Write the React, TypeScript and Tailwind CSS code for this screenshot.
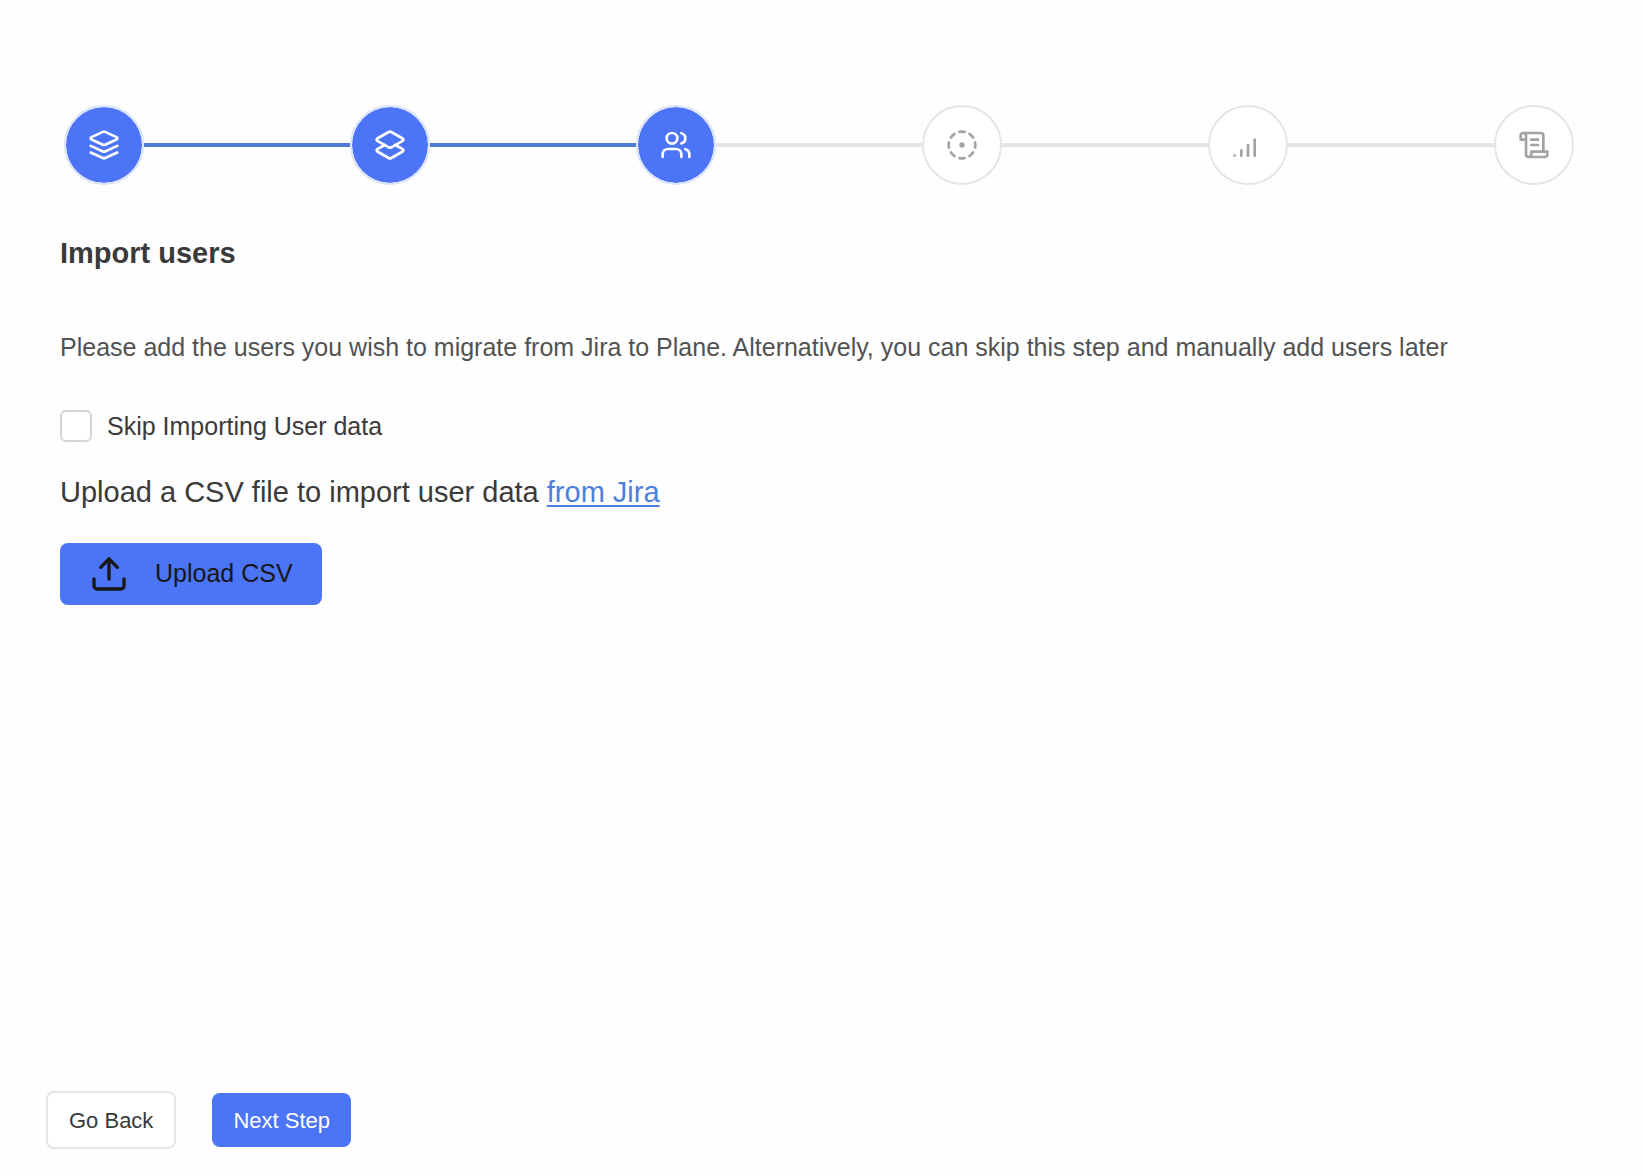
import { Fragment } from "react";
import { CircleDotDashed, SignalHigh, Upload } from "lucide-react";

function StrokeIcon({ paths, size = 32 }: { paths: string[]; size?: number }) {
  return (
    <svg
      width={size}
      height={size}
      viewBox="0 0 24 24"
      fill="none"
      stroke="currentColor"
      strokeWidth={2}
      strokeLinecap="round"
      strokeLinejoin="round"
      aria-hidden="true"
    >
      {paths.map((d) => (
        <path key={d} d={d} />
      ))}
    </svg>
  );
}

const layers = [
  "m12.83 2.18a2 2 0 0 0-1.66 0L2.6 6.08a1 1 0 0 0 0 1.83l8.58 3.91a2 2 0 0 0 1.66 0l8.58-3.9a1 1 0 0 0 0-1.83Z",
  "m22 17.65-9.17 4.16a2 2 0 0 1-1.66 0L2 17.65",
  "m22 12.65-9.17 4.16a2 2 0 0 1-1.66 0L2 12.65",
];

const twoLayers = [
  "m16.02 12 5.48 3.13a1 1 0 0 1 0 1.74L13 21.74a2 2 0 0 1-2 0l-8.5-4.87a1 1 0 0 1 0-1.74L7.98 12",
  "M13 13.74a2 2 0 0 1-2 0L2.5 8.87a1 1 0 0 1 0-1.74L11 2.26a2 2 0 0 1 2 0l8.5 4.87a1 1 0 0 1 0 1.74Z",
];

const users = [
  "M16 21v-2a4 4 0 0 0-4-4H6a4 4 0 0 0-4 4v2",
  "M5 7a4 4 0 1 0 8 0a4 4 0 1 0-8 0",
  "M22 21v-2a4 4 0 0 0-3-3.87",
  "M16 3.13a4 4 0 0 1 0 7.75",
];

const scroll = [
  "M8 21h12a2 2 0 0 0 2-2v-2H10v2a2 2 0 1 1-4 0V5a2 2 0 1 0-4 0v3h4",
  "M19 17V5a2 2 0 0 0-2-2H4",
  "M15 8h-5",
  "M15 12h-5",
];

const steps = [
  { label: "Import Jira", icon: <StrokeIcon paths={layers} />, done: true },
  { label: "Select project", icon: <StrokeIcon paths={twoLayers} />, done: true },
  { label: "Import users", icon: <StrokeIcon paths={users} />, done: true },
  { label: "Map states", icon: <CircleDotDashed size={32} />, done: false },
  { label: "Map priorities", icon: <SignalHigh size={32} />, done: false },
  { label: "Summary", icon: <StrokeIcon paths={scroll} />, done: false },
];

function Stepper() {
  return (
    <nav aria-label="Import steps" className="flex items-center pr-2 pl-1">
      {steps.map(({ label, icon, done }, index) => (
        <Fragment key={label}>
          {index > 0 && (
            <div className={done ? "h-1 flex-1 bg-[#4c78d8]" : "h-1 flex-1 bg-[#e5e5e5]"} />
          )}
          <div
            role="img"
            aria-label={label}
            className={
              done
                ? "flex size-20 shrink-0 items-center justify-center rounded-full border-2 border-[#dbe3fb] bg-[#4b74f6] bg-clip-padding text-white"
                : "flex size-20 shrink-0 items-center justify-center rounded-full border-2 border-[#e5e5e5] bg-white text-[#a3a3a3]"
            }
          >
            {icon}
          </div>
        </Fragment>
      ))}
    </nav>
  );
}

export default function App() {
  return (
    <div className="flex min-h-screen flex-col bg-[#fefefe] pt-[105px] pb-[27px] font-['Liberation_Sans',Arial,sans-serif] text-[#3a3a3a]">
      <main className="flex flex-1 flex-col items-stretch px-[60px]">
        <Stepper />
        <h1 className="mt-12 text-[29px] leading-10 font-bold">Import users</h1>
        <p className="mt-14 text-[25px] leading-9 text-[#525252]">
          Please add the users you wish to migrate from Jira to Plane. Alternatively, you can skip this step and
          manually add users later
        </p>
        <label className="mt-[43px] flex items-center gap-[15px] self-start text-[25px] leading-9">
          <input
            type="checkbox"
            className="size-8 appearance-none rounded-md border-2 border-[#d4d4d4] bg-white checked:bg-[#4b74f6]"
          />
          Skip Importing User data
        </label>
        <p className="mt-7 text-[29px] leading-10">
          Upload a CSV file to import user data{" "}
          <a href="#jira" className="text-[#4c7fdb] underline decoration-2 underline-offset-3">
            from Jira
          </a>
        </p>
        <button
          type="button"
          className="mt-[31px] flex h-[62px] items-center gap-[26px] self-start rounded-lg bg-[#4b74f6] px-[29px] text-[25px] text-[#171717]"
        >
          <Upload size={40} />
          Upload CSV
        </button>
      </main>
      <footer className="flex items-center gap-9 px-[46px]">
        <button type="button" className="h-[58px] rounded-lg border-2 border-[#e5e5e5] bg-white px-[21px] text-[22px]">
          Go Back
        </button>
        <button type="button" className="h-[54px] rounded-lg bg-[#4b74f6] px-[21px] text-[22px] text-white">
          Next Step
        </button>
      </footer>
    </div>
  );
}
